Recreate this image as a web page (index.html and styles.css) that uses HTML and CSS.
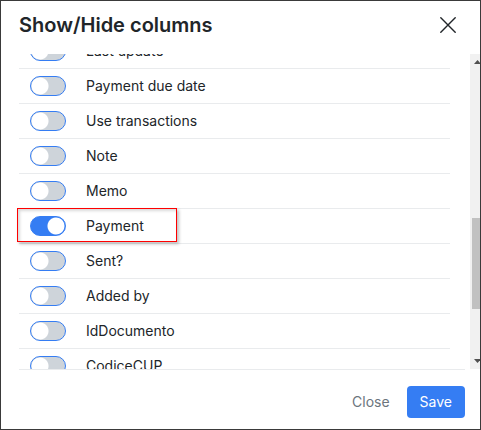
FILE: index.html
```html
<!DOCTYPE html>
<html lang="en">
<head>
<meta charset="utf-8">
<title>Show/Hide columns</title>
<link rel="stylesheet" href="styles.css">
</head>
<body>
<main class="dialog">
  <header class="dialog-header">
    <h1 class="title">Show/Hide columns</h1>
    <button class="close-icon" type="button" aria-label="Close dialog">
      <svg width="16" height="16" viewBox="0 0 16 16"><path d="M0.8 0.8L15.2 15.2M15.2 0.8L0.8 15.2" fill="none" stroke="#212529" stroke-width="1.4" stroke-linecap="round"/></svg>
    </button>
  </header>
  <div class="dialog-body">
    <ul class="columns">
      <li class="column"><label class="option"><input class="switch" type="checkbox">Last update</label></li>
      <li class="column"><label class="option"><input class="switch" type="checkbox">Payment due date</label></li>
      <li class="column"><label class="option"><input class="switch" type="checkbox">Use transactions</label></li>
      <li class="column"><label class="option"><input class="switch" type="checkbox">Note</label></li>
      <li class="column"><label class="option"><input class="switch" type="checkbox">Memo</label></li>
      <li class="column highlighted"><label class="option"><input class="switch" type="checkbox" checked>Payment</label></li>
      <li class="column"><label class="option"><input class="switch" type="checkbox">Sent?</label></li>
      <li class="column"><label class="option"><input class="switch" type="checkbox">Added by</label></li>
      <li class="column"><label class="option"><input class="switch" type="checkbox">IdDocumento</label></li>
      <li class="column"><label class="option"><input class="switch" type="checkbox">CodiceCUP</label></li>
    </ul>
    <div class="scrollbar">
      <svg class="arrow" width="7" height="4" viewBox="0 0 7 4"><path d="M0 4L3.5 0L7 4Z" fill="#505050"/></svg>
      <div class="track"><div class="thumb"></div></div>
      <svg class="arrow" width="7" height="4" viewBox="0 0 7 4"><path d="M0 0L3.5 4L7 0Z" fill="#505050"/></svg>
    </div>
  </div>
  <footer class="dialog-footer">
    <button class="button button-plain" type="button">Close</button>
    <button class="button button-primary" type="button">Save</button>
  </footer>
</main>
</body>
</html>
```
FILE: styles.css
```css
*,
*::after {
  box-sizing: border-box;
}

body {
  margin: 0;
  background: #fff;
  color: #212529;
  font: 14px/20px Inter, "Liberation Sans", sans-serif;
}

button {
  padding: 0;
  border: 0;
  background: none;
  color: inherit;
  font: inherit;
}

.dialog {
  display: flex;
  flex-direction: column;
  height: 100vh;
  border: 1px solid #3a3a3a;
}

.dialog-header {
  display: flex;
  align-items: center;
  justify-content: space-between;
  padding: 12px 24px 17px 18px;
}

.title {
  margin: 0;
  font-size: 20px;
  line-height: 24px;
  font-weight: 600;
}

.close-icon {
  display: flex;
}

.dialog-body {
  display: flex;
  flex: 1;
  min-height: 0;
  overflow: hidden;
}

.columns {
  flex: 1;
  margin: -20px 20px 0 18px;
  padding: 0;
  list-style: none;
}

.column {
  position: relative;
  height: 35px;
  border-bottom: 1px solid #e9ebed;
}

.option {
  display: flex;
  align-items: center;
  gap: 20px;
  height: 34px;
  padding-left: 11px;
}

.highlighted::after {
  content: "";
  position: absolute;
  top: -1px;
  left: -2px;
  width: 160px;
  height: 34px;
  border: 1px solid #f00;
  box-shadow: 2px 2px 3px rgba(0, 0, 0, 0.25), inset 2px 2px 3px rgba(0, 0, 0, 0.15);
  pointer-events: none;
}

.switch {
  appearance: none;
  width: 36px;
  height: 20px;
  margin: 0;
  border: 1px solid #357df3;
  border-radius: 10px;
  background: radial-gradient(circle at 9px 9px, #fff 8px, #ced4da 9px);
}

.switch:checked {
  background: radial-gradient(circle at 25px 9px, #fff 8px, #357df3 9px);
}

.scrollbar {
  display: flex;
  flex-direction: column;
  align-items: flex-end;
  width: 10px;
  padding: 6px 0;
  background: #f1f1f1;
}

.arrow {
  flex: none;
  margin-right: -1px;
}

.track {
  display: flex;
  flex: 1;
  flex-direction: column;
  justify-content: flex-end;
  width: 8px;
  padding-bottom: 50px;
}

.thumb {
  height: 91px;
  background: #c1c1c1;
}

.dialog-footer {
  display: flex;
  justify-content: flex-end;
  gap: 4px;
  margin: 0 15px 0 18px;
  padding: 16px 0 11px;
  border-top: 1px solid #e9ebed;
}

.button {
  height: 32px;
  padding: 0 13px;
  border-radius: 4px;
}

.button-plain {
  color: #6c757d;
}

.button-primary {
  background: #357df3;
  color: #fff;
}
```
